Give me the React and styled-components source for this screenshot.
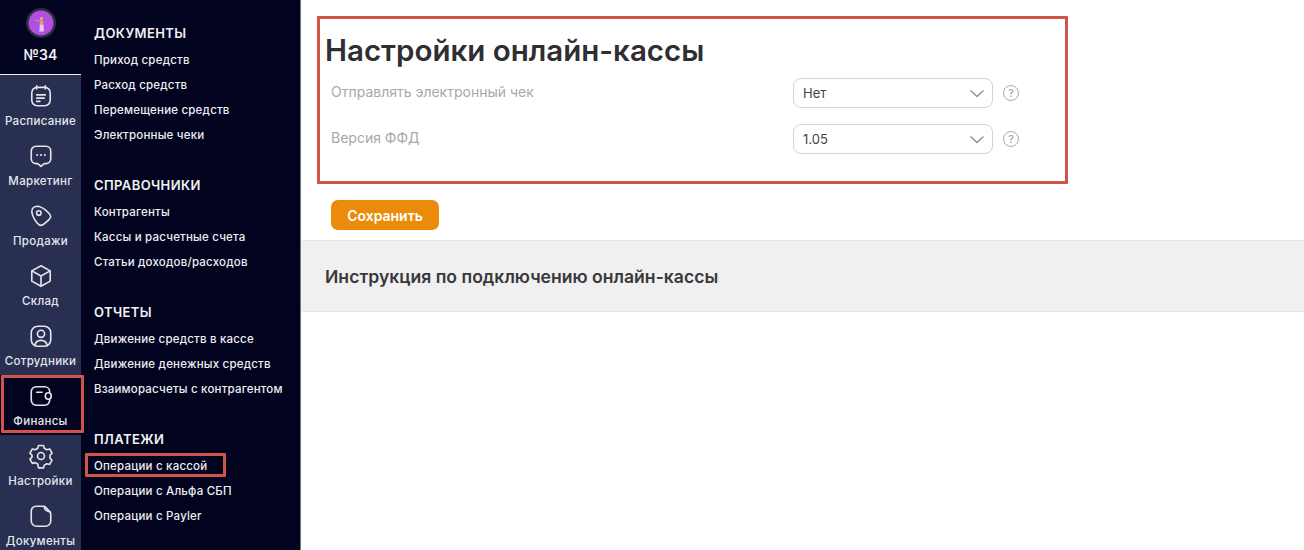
import React from "react";
import styled, { createGlobalStyle } from "styled-components";

const GlobalStyle = createGlobalStyle`
  html, body {
    margin: 0;
    padding: 0;
    height: 100%;
    background: #fff;
    overflow: hidden;
  }
  * {
    box-sizing: border-box;
  }
`;

const railItems = [
  {
    label: "Расписание",
    icon: (
      <>
        <rect x="3.5" y="4" width="17" height="17" rx="5" />
        <path d="M8 2.5v3M16 2.5v3M8 11h8M8 14h7M8 17h3" />
      </>
    ),
  },
  {
    label: "Маркетинг",
    icon: (
      <>
        <path d="M7.5 3h9A4.5 4.5 0 0 1 21 7.5v7a4.5 4.5 0 0 1-4.5 4.5H15l-3 2.5L9 19H7.5A4.5 4.5 0 0 1 3 14.5v-7A4.5 4.5 0 0 1 7.5 3z" />
        <path d="M8.5 11h.01M12 11h.01M15.5 11h.01" strokeWidth="1.9" />
      </>
    ),
  },
  {
    label: "Продажи",
    icon: (
      <>
        <path d="M3.5 8C3.300 5 5.500 3 8.500 3c3 .1 5.500 1.700 8 3.800 2.700 2.300 5 4.400 4.300 6.300-.7 2-3 3.700-5.300 5.700-2 1.800-4 2.600-5.700 1C7.500 18 3.800 12.500 3.500 8z" />
        <circle cx="10" cy="9.300" r="2.100" />
      </>
    ),
  },
  {
    label: "Склад",
    icon: (
      <>
        <path d="M12 2.500l8.500 4.800v9.400L12 21.500l-8.500-4.800V7.300z" />
        <path d="M3.500 7.300L12 12l8.500-4.700M12 12v9.500" />
      </>
    ),
  },
  {
    label: "Сотрудники",
    icon: (
      <>
        <rect x="3" y="3" width="18" height="18.500" rx="6" />
        <circle cx="12" cy="10" r="3.300" />
        <path d="M6.300 21c.4-3.500 2.700-5 5.700-5s5.300 1.500 5.700 5" />
      </>
    ),
  },
  {
    label: "Финансы",
    active: true,
    icon: (
      <>
        <path d="M20 8.500V8a4.500 4.500 0 0 0-4.500-4.500h-8A4.500 4.500 0 0 0 3 8v8a4.500 4.500 0 0 0 4.500 4.500h8A4.500 4.500 0 0 0 20 16v-.5" />
        <path d="M8 8.500h5" />
        <rect x="16" y="9" width="5.500" height="6" rx="3" />
      </>
    ),
  },
  {
    label: "Настройки",
    icon: (
      <>
        <path d="M9.700 3h4.600l.7 2.600 2.400 1.300 2.600-.7 2.200 3.900-1.900 1.900v2.700l1.900 1.900-2.200 3.900-2.600-.7-2.400 1.300-.7 2.600H9.700L9 20.100l-2.400-1.300-2.600.7-2.200-3.900 1.900-1.900V12L1.800 10.100 4 6.200l2.600.7L9 5.600z" transform="translate(0 -.700)" />
        <circle cx="12" cy="12" r="3.200" />
      </>
    ),
  },
  {
    label: "Документы",
    icon: (
      <>
        <path d="M3 7.500A4.500 4.500 0 0 1 7.500 3h6.700c.9 0 1.600.4 2.200 1l3.600 4c.6.7 1 1.300 1 2.200v6.300a5 5 0 0 1-5 5H8a5 5 0 0 1-5-5z" />
        <path d="M15 3.300c0 2.700 1.500 4.200 5.700 5" />
      </>
    ),
  },
];

const menuGroups = [
  {
    title: "ДОКУМЕНТЫ",
    links: ["Приход средств", "Расход средств", "Перемещение средств", "Электронные чеки"],
  },
  {
    title: "СПРАВОЧНИКИ",
    links: ["Контрагенты", "Кассы и расчетные счета", "Статьи доходов/расходов"],
  },
  {
    title: "ОТЧЕТЫ",
    links: ["Движение средств в кассе", "Движение денежных средств", "Взаиморасчеты с контрагентом"],
  },
  {
    title: "ПЛАТЕЖИ",
    links: ["Операции с кассой", "Операции с Альфа СБП", "Операции с Payler"],
  },
];

const settings = [
  { label: "Отправлять электронный чек", value: "Нет" },
  { label: "Версия ФФД", value: "1.05" },
];

const Avatar = () => (
  <svg width="32" height="32" viewBox="0 0 32 32">
    <circle cx="16" cy="16" r="15" fill="#2b2d42" />
    <circle cx="16" cy="16" r="12.500" fill="#b04fe0" />
    <circle cx="16.500" cy="11.500" r="1.500" fill="#f0b27a" />
    <path d="M15 13.500h3l.3 4h-3.600z" fill="#f0a13c" />
    <path d="M14.800 17.500h3.700l.3 7h-4.500z" fill="#e6c9ef" />
    <path d="M15 14l-5-1" stroke="#f0b27a" strokeWidth="0.600" />
  </svg>
);

const App = () => (
  <Page>
    <GlobalStyle />
    <Sidebar>
      <Rail>
        <Brand>
          <Avatar />
          <BrandName>№34</BrandName>
        </Brand>
        {railItems.map((item) => (
          <RailItem key={item.label} $active={item.active}>
            <RailIcon viewBox="0 0 24 24">{item.icon}</RailIcon>
            <RailLabel>{item.label}</RailLabel>
            {item.active && <Mark $inset="0 -3px 2px 1px" />}
          </RailItem>
        ))}
      </Rail>
      <Menu>
        {menuGroups.map((group) => (
          <MenuGroup key={group.title}>
            <MenuTitle>{group.title}</MenuTitle>
            {group.links.map((link) => (
              <MenuLink key={link}>
                {link}
                {link === "Операции с кассой" && <Mark $inset="-1px -19px 2px -9px" />}
              </MenuLink>
            ))}
          </MenuGroup>
        ))}
      </Menu>
    </Sidebar>
    <Main>
      <SettingsBox>
        <Title>Настройки онлайн-кассы</Title>
        {settings.map((row) => (
          <Row key={row.label}>
            <RowLabel>{row.label}</RowLabel>
            <Select>
              {row.value}
              <svg width="16" height="9" viewBox="0 0 16 9" fill="none" stroke="#8e8e8e" strokeWidth="1.300">
                <path d="M1.500 1.500L8 7.500l6.500-6" />
              </svg>
            </Select>
            <Help>?</Help>
          </Row>
        ))}
      </SettingsBox>
      <SaveButton>Сохранить</SaveButton>
      <Instruction>Инструкция по подключению онлайн-кассы</Instruction>
    </Main>
  </Page>
);

const Page = styled.div`
  display: flex;
  width: 1304px;
  height: 550px;
  overflow: hidden;
  font-family: Inter, "Liberation Sans", sans-serif;
`;

const Sidebar = styled.aside`
  display: flex;
  flex: 0 0 301px;
  background: #02041f;
  border-right: 1px solid #77788c;
`;

const Rail = styled.nav`
  flex: 0 0 81px;
  background: #282f50;
`;

const Brand = styled.div`
  display: flex;
  flex-direction: column;
  align-items: center;
  height: 75px;
  padding-top: 7px;
  background: #02041f;
  border-bottom: 1.500px solid #f2f2f2;
`;

const BrandName = styled.div`
  margin-top: 7px;
  color: #f1f1f4;
  font-size: 14px;
  font-weight: 600;
  letter-spacing: 0.2px;
  line-height: 18px;
`;

const RailItem = styled.div`
  position: relative;
  display: flex;
  flex-direction: column;
  align-items: center;
  height: 60px;
  padding-top: 8px;
  background: ${(p) => (p.$active ? "#02041f" : "transparent")};
`;

const RailIcon = styled.svg`
  width: 26px;
  height: 26px;
  fill: none;
  stroke: #e4e4ea;
  stroke-width: 1.500;
  stroke-linecap: round;
  stroke-linejoin: round;
`;

const RailLabel = styled.div`
  margin-top: 4px;
  color: #e6e7ee;
  font-size: 11.500px;
  font-weight: 500;
  letter-spacing: 0.3px;
  line-height: 16px;
  white-space: nowrap;
`;

const Mark = styled.span`
  position: absolute;
  inset: ${(p) => p.$inset};
  border: 3px solid #d0544a;
  border-radius: 1px;
  pointer-events: none;
`;

const Menu = styled.div`
  flex: 1;
  padding: 24px 0 0 13px;
`;

const MenuGroup = styled.section`
  height: 127px;

  &:nth-child(1) {
    height: 152px;
  }
`;

const MenuTitle = styled.div`
  margin-bottom: 6px;
  color: #f1f1f4;
  font-size: 13px;
  font-weight: 600;
  letter-spacing: 0.4px;
  line-height: 18px;
`;

const MenuLink = styled.div`
  position: relative;
  width: fit-content;
  height: 25px;
  color: #eeeef3;
  font-size: 11.500px;
  font-weight: 500;
  letter-spacing: 0.2px;
  line-height: 25px;
  white-space: nowrap;
`;

const Main = styled.main`
  flex: 1;
  background: #fff;
`;

const SettingsBox = styled.section`
  width: 751px;
  height: 168px;
  margin: 16px 0 0 16px;
  padding: 12px 0 0 5px;
  border: 3px solid #d0544a;
  border-radius: 1px;
`;

const Title = styled.h1`
  margin: 0 0 9px;
  color: #2e2e33;
  font-size: 29.500px;
  font-weight: 600;
  line-height: 38px;
  white-space: nowrap;
`;

const Row = styled.div`
  display: flex;
  align-items: flex-start;
  height: 46px;
  padding-left: 6px;
`;

const RowLabel = styled.div`
  flex: 0 0 462px;
  padding-top: 5px;
  color: #a8a8a8;
  font-size: 14px;
  line-height: 18px;
`;

const Select = styled.div`
  display: flex;
  align-items: center;
  justify-content: space-between;
  width: 200px;
  height: 30px;
  padding: 0 7px 0 9px;
  border: 1px solid #d4d4d4;
  border-radius: 8px;
  color: #444;
  font-size: 13px;
`;

const Help = styled.div`
  width: 16px;
  height: 16px;
  margin: 7px 0 0 10px;
  border: 1px solid #aaa;
  border-radius: 50%;
  color: #999;
  font-size: 11px;
  line-height: 14px;
  text-align: center;
`;

const SaveButton = styled.button`
  display: block;
  width: 108px;
  height: 30px;
  margin: 16px 0 10px 30px;
  border: none;
  border-radius: 7px;
  background: #eb8b09;
  color: #fff;
  font-family: inherit;
  font-size: 14px;
  font-weight: 600;
`;

const Instruction = styled.div`
  height: 72px;
  padding-left: 24px;
  background: #f0f0f0;
  border-top: 1px solid #e6e6e6;
  border-bottom: 1px solid #e6e6e6;
  color: #38383c;
  font-size: 17.600px;
  font-weight: 600;
  line-height: 71px;
`;

export default App;
